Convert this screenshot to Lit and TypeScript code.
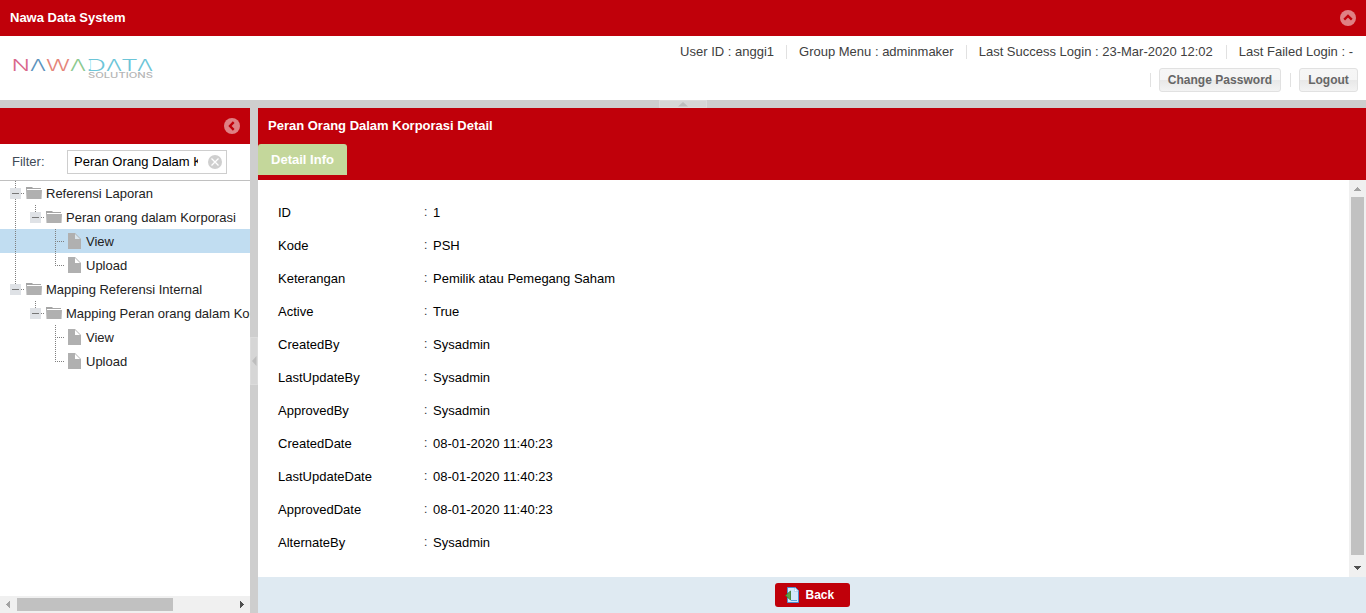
import { LitElement, html, css, svg } from "lit";
import { customElement } from "lit/decorators.js";
import { classMap } from "lit/directives/class-map.js";

interface TreeNode {
  label: string;
  depth: number;
  leaf?: boolean;
  selected?: boolean;
  last?: boolean;
  rail?: boolean;
}

const NODES: TreeNode[] = [
  { label: "Referensi Laporan", depth: 0 },
  { label: "Peran orang dalam Korporasi", depth: 1, rail: true, last: true },
  { label: "View", depth: 2, leaf: true, selected: true, rail: true },
  { label: "Upload", depth: 2, leaf: true, rail: true, last: true },
  { label: "Mapping Referensi Internal", depth: 0, last: true },
  { label: "Mapping Peran orang dalam Korporasi", depth: 1, last: true },
  { label: "View", depth: 2, leaf: true },
  { label: "Upload", depth: 2, leaf: true, last: true },
];

const FIELDS: [string, string][] = [
  ["ID", "1"],
  ["Kode", "PSH"],
  ["Keterangan", "Pemilik atau Pemegang Saham"],
  ["Active", "True"],
  ["CreatedBy", "Sysadmin"],
  ["LastUpdateBy", "Sysadmin"],
  ["ApprovedBy", "Sysadmin"],
  ["CreatedDate", "08-01-2020 11:40:23"],
  ["LastUpdateDate", "08-01-2020 11:40:23"],
  ["ApprovedDate", "08-01-2020 11:40:23"],
  ["AlternateBy", "Sysadmin"],
];

// glyph, x, width, colour
const LOGO: [string, number, number, string][] = [
  ["N", 11.5, 18.5, "#d9688c"],
  ["Λ", 30, 16, "#5c93bd"],
  ["W", 46, 24, "#e58579"],
  ["Λ", 70, 16, "#8cc98f"],
  ["D", 86, 20, "#6cc5d8"],
  ["Λ", 106, 16, "#6cc5d8"],
  ["T", 121, 17, "#6cc5d8"],
  ["Λ", 137, 16, "#6cc5d8"],
];

const toolIcon = (path: string) => html`
  <svg width="16" height="16" viewBox="0 0 16 16">
    <circle cx="8" cy="8" r="8" fill="#df8084" />
    <path d=${path} fill="none" stroke="#c0000a" stroke-width="2.4" />
  </svg>`;

const arrow = (points: string, fill: string) => html`
  <svg width="17" height="17" viewBox="0 0 17 17" shape-rendering="crispEdges">
    <polygon points=${points} fill=${fill} />
  </svg>`;

@customElement("app-root")
export class AppRoot extends LitElement {
  static styles = css`
    :host {
      display: flex;
      flex-direction: column;
      width: 100%;
      height: 613px;
      overflow: hidden;
      background: #fff;
      color: #404040;
      font: 13px/17px "Liberation Sans", Arial, sans-serif;
    }
    * { box-sizing: border-box; }
    svg { display: block; flex: none; }
    .bar {
      display: flex;
      align-items: center;
      justify-content: space-between;
      height: 36px;
      flex: none;
      padding: 0 10px;
      background: #c0000a;
      color: #fff;
      font-weight: bold;
    }
    .bar .title { white-space: nowrap; margin-top: -1px; }
    .banner {
      display: flex;
      justify-content: space-between;
      height: 64px;
      flex: none;
    }
    .info { display: flex; flex-direction: column; align-items: flex-end; padding-right: 8px; }
    .line { display: flex; align-items: center; height: 14px; margin-top: 9px; padding-right: 5px; white-space: nowrap; }
    .line span { margin-top: -2px; }
    .sep { width: 1px; height: 14px; background: #e1e1e1; margin: 0 12px; }
    .line .sep:last-of-type { margin-right: 12px; margin-left: 13px; }
    .buttons { display: flex; align-items: center; margin-top: 9px; }
    .buttons .sep { margin: 0 8px 0 9px; }
    .btn {
      height: 24px;
      border: 1px solid #e1e1e1;
      border-radius: 3px;
      background: linear-gradient(#f6f6f6, #f5f5f5 50%, #e8e8e8 51%, #f3f3f3);
      color: #666;
      font-weight: bold;
      font-size: 12px;
      line-height: 22px;
      text-align: center;
      white-space: nowrap;
    }
    .pw { width: 122px; letter-spacing: 0.03px; }
    .lo { width: 59px; }
    .hsplit { height: 8px; flex: none; background: #cecece; display: flex; justify-content: center; }
    .grip { background: #d6d6d6; border: 1px solid #dcdcdc; display: flex; align-items: center; justify-content: center; }
    .hsplit .grip { width: 48px; height: 8px; }
    .vsplit { width: 8px; flex: none; background: #cecece; display: flex; align-items: center; }
    .vsplit .grip { width: 8px; height: 48px; }
    .work { display: flex; flex: 1; min-height: 0; }
    .side { width: 250px; flex: none; display: flex; flex-direction: column; }
    .filter { display: flex; align-items: center; height: 37px; flex: none; border-bottom: 1px solid #c0c0c0; padding-left: 12px; }
    .filter .name { width: 55px; color: #404a58; margin-top: -2px; }
    .input {
      display: flex;
      align-items: center;
      width: 160px;
      height: 24px;
      margin-top: -1px;
      border: 1px solid #cecece;
      padding: 0 4px 0 6px;
      color: #000;
    }
    .value { flex: none; width: 124px; overflow: hidden; white-space: nowrap; margin-right: 10px; }
    .tree { flex: 1; overflow: hidden; min-height: 0; }
    .node { display: flex; align-items: center; height: 24px; white-space: nowrap; overflow: hidden; color: #222; }
    .node.sel { background: #c1ddf1; }
    .node .text { margin-top: 1px; }
    .hscroll { height: 17px; flex: none; background: #f0f0f0; display: flex; align-items: center; justify-content: space-between; }
    .hscroll .track { width: 216px; }
    .hscroll .thumb { width: 156px; height: 13px; background: #c1c1c1; }
    .main { flex: 1; display: flex; flex-direction: column; min-width: 0; }
    .tabs { height: 36px; flex: none; background: #c0000a; display: flex; }
    .tab {
      width: 89px;
      height: 31px;
      border-radius: 3px 3px 0 0;
      background: #c4d79b;
      color: #fff;
      font-weight: bold;
      line-height: 31px;
      text-align: center;
      white-space: nowrap;
    }
    .body { flex: 1; display: flex; min-height: 0; }
    .form { flex: 1; padding: 16px 20px 0; color: #000; }
    .field { display: flex; align-items: center; height: 33px; white-space: nowrap; }
    .field .key { width: 146px; }
    .field .colon { width: 9px; color: #333; font-size: 12px; margin-top: -1px; }
    .vscroll { width: 17px; background: #f0f0f0; display: flex; flex-direction: column; justify-content: space-between; align-items: center; }
    .vscroll .thumb { width: 13px; height: 358px; background: #c1c1c1; margin-bottom: 5px; }
    .foot { height: 36px; flex: none; background: #dfeaf2; display: flex; align-items: center; justify-content: center; }
    .back {
      display: flex;
      align-items: center;
      gap: 5px;
      width: 75px;
      height: 24px;
      padding-left: 10px;
      border-radius: 3px;
      background: #c0000a;
      color: #fff;
      font-weight: bold;
      font-size: 12px;
    }
    .back span { margin-top: 1px; }
  `;

  private renderNode(n: TreeNode) {
    const left = n.depth * 20;
    const cx = left + 15.5;
    const w = left + 46;
    const dash = (x: number, y1: number, y2: number) =>
      svg`<line x1=${x} x2=${x} y1=${y1} y2=${y2} stroke="#7f7f7f" stroke-dasharray="1 1" />`;
    const connector = n.leaf ? left + 24 : left + 25;
    return html`
      <div class=${classMap({ node: true, sel: !!n.selected })}>
        <svg width=${w} height="24" viewBox="0 0 ${w} 24">
          ${n.rail ? dash(15.5, 0, 24) : null}
          ${dash(cx, 0, n.last ? 13 : 24)}
          <line x1=${left + 15} x2=${connector} y1="12.5" y2="12.5" stroke="#7f7f7f" stroke-dasharray="1 1" />
          ${n.leaf
            ? svg`<path d="M${left + 28} 4h7l6 6v10h-13z" fill="#b0b0b0"/><path d="M${left + 35} 5v5h5z" fill="${n.selected ? "#d9e5ed" : "#fff"}"/>`
            : svg`<rect x=${left + 10} y="7" width="11" height="11" fill="#dfe2e6"/>
                  <path d="M${left + 12} 12.5h7" stroke="#777"/>
                  <path d="M${left + 26} 6h6l1 1h8v1h-15z" fill="#a5a5a5"/>
                  <path d="M${left + 26} 8h1v1h15l-.5 9h-15z" fill="#b0b0b0"/>`}
        </svg>
        <span class="text">${n.label}</span>
      </div>`;
  }

  render() {
    return html`
      <div class="bar">
        <span class="title">Nawa Data System</span>
        ${toolIcon("M4.2 9.7 8 6l3.8 3.7")}
      </div>
      <div class="banner">
        <svg width="170" height="64" viewBox="0 0 170 64" role="img" aria-label="NAWADATA SOLUTIONS">
          ${LOGO.map(([g, x, w, c]) => svg`<text x=${x} y="34.5" textLength=${w} lengthAdjust="spacingAndGlyphs" fill=${c} font-family="Inter, Lato, sans-serif" font-weight="300" font-size="16">${g}</text>`)}
          <rect x="86" y="24.2" width="4.5" height="9" fill="#fff" />
          <text x="88" y="42" textLength="65" lengthAdjust="spacingAndGlyphs" fill="#b5b5b5" font-family="Inter, sans-serif" font-weight="500" font-size="7">SOLUTIONS</text>
        </svg>
        <div class="info">
          <div class="line">
            <span>User ID : anggi1</span><i class="sep"></i>
            <span>Group Menu : adminmaker</span><i class="sep"></i>
            <span>Last Success Login : 23-Mar-2020 12:02</span><i class="sep"></i>
            <span>Last Failed Login : -</span>
          </div>
          <div class="buttons">
            <i class="sep"></i><div class="btn pw">Change Password</div>
            <i class="sep"></i><div class="btn lo">Logout</div>
          </div>
        </div>
      </div>
      <div class="hsplit"><div class="grip">
        <svg width="10" height="5" viewBox="0 0 10 5"><path d="M0 4.5 5 0l5 4.5z" fill="#bdbdbd"/></svg>
      </div></div>
      <div class="work">
        <div class="side">
          <div class="bar"><span></span>${toolIcon("M9.7 4.2 6 8l3.7 3.8")}</div>
          <div class="filter">
            <span class="name">Filter:</span>
            <div class="input">
              <span class="value">Peran Orang Dalam Korporasi</span>
              <svg width="14" height="14" viewBox="0 0 14 14"><circle cx="7" cy="7" r="7" fill="#cfcfcf"/><path d="M3.5 3.5l7 7M10.5 3.5l-7 7" stroke="#fff" stroke-width="1.3"/></svg>
            </div>
          </div>
          <div class="tree">${NODES.map((n) => this.renderNode(n))}</div>
          <div class="hscroll">
            ${arrow("6,8.5 10,4.5 10,12.5", "#a3a3a3")}
            <div class="track"><div class="thumb"></div></div>
            ${arrow("11,8.5 7,4.5 7,12.5", "#505050")}
          </div>
        </div>
        <div class="vsplit"><div class="grip">
          <svg width="5" height="10" viewBox="0 0 5 10"><path d="M4.5 0 0 5l4.5 5z" fill="#bdbdbd"/></svg>
        </div></div>
        <div class="main">
          <div class="bar"><span class="title">Peran Orang Dalam Korporasi Detail</span></div>
          <div class="tabs"><div class="tab">Detail Info</div></div>
          <div class="body">
            <div class="form">
              ${FIELDS.map(([k, v]) => html`<div class="field"><span class="key">${k}</span><span class="colon">:</span><span>${v}</span></div>`)}
            </div>
            <div class="vscroll">
              ${arrow("8.5,7 12.5,11 4.5,11", "#a3a3a3")}
              <div class="thumb"></div>
              ${arrow("4.5,6 12.5,6 8.5,10", "#505050")}
            </div>
          </div>
          <div class="foot">
            <div class="back">
              <svg width="16" height="16" viewBox="0 0 16 16">
                <path d="M2.5 .5h8l3 3v12h-11z" fill="#d3e9fb" stroke="#4f8fcf"/>
                <path d="M9.5 1v3.5h3.5z" fill="#fff" stroke="#a8cbea" stroke-width=".7"/>
                <path d="M6 13.500h6" stroke="#5aa7e0"/>
                <path d="M.5 8.500 5.500 4v9z" fill="#5aa34a" stroke="#337a2e" stroke-width=".8"/>
              </svg>
              <span>Back</span>
            </div>
          </div>
        </div>
      </div>
    `;
  }
}
